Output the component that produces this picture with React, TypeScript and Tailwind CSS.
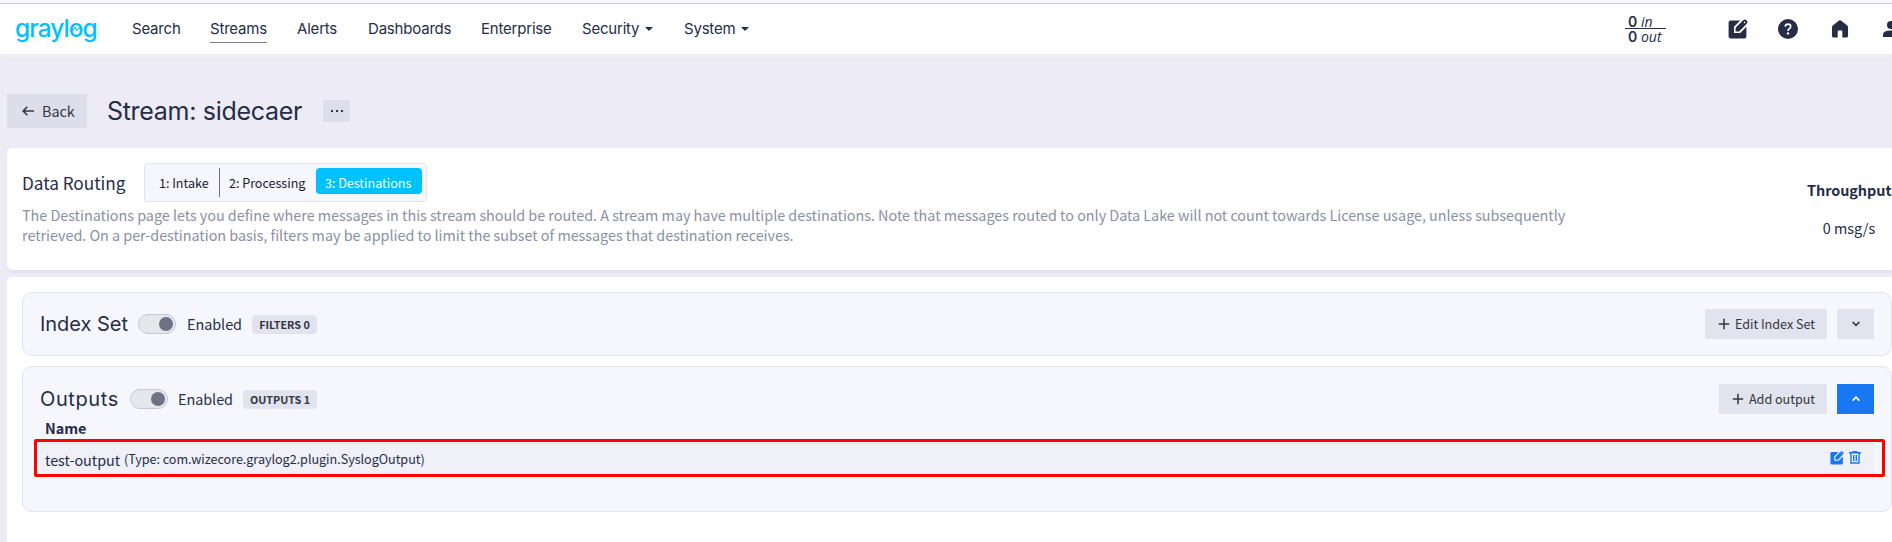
import React from "react";

const sans = "font-['Noto_Sans_CJK_SC',sans-serif]";
const head = "font-['Inter',sans-serif]";

function EditSquare({ className }: { className: string }) {
  return (
    <svg viewBox="0 0 20 20" className={className} fill="currentColor">
      <path d="M2.600 1.600H12.200L6 7.800V14H12.200L18.400 7.800V17.400A2 2 0 0 1 16.400 19.400H2.600A2 2 0 0 1 .6 17.400V3.600A2 2 0 0 1 2.600 1.600Z" />
      <path
        fillRule="evenodd"
        d="M7.600 12.400V8.700L15.100 1.200Q16.800 -.3 18.500 1.300Q20.200 3 18.800 4.800L11.200 12.400ZM15.600 3.300L16.700 4.400L17.600 3.500L16.500 2.400Z"
      />
    </svg>
  );
}

function Plus() {
  return (
    <svg viewBox="0 0 12 12" className="h-3 w-3" fill="none" stroke="currentColor" strokeWidth="1.5">
      <path d="M6 .8V11.200M.8 6H11.200" />
    </svg>
  );
}

function Caret() {
  return (
    <svg viewBox="0 0 8 4" className="ml-1.5 h-1 w-2" fill="currentColor">
      <path d="M0 0H8L4 4Z" />
    </svg>
  );
}

function Logo() {
  return (
    <div className="relative ml-[15px] h-[30px] w-[84px] shrink-0 text-[#00c1ff]">
      <span className={`${head} block whitespace-nowrap text-[24.500px] font-medium leading-[30px] tracking-[-0.95px]`}>graylog</span>
      <svg viewBox="0 0 8 6" className="absolute left-[57px] top-[13px] h-1.5 w-2" fill="none" stroke="currentColor">
        <path d="M0 3.500H2L3.300 1L4.700 5L6 2.500H8" />
      </svg>
    </div>
  );
}

function Toggle() {
  return (
    <span className="flex h-5 w-[38px] items-center justify-end rounded-full border border-[#c5c8dc] bg-[#e6e7ea] pr-0.5">
      <span className="h-3.5 w-3.5 rounded-full bg-[#6e7284]" />
    </span>
  );
}

export default function App() {
  return (
    <div className={`${sans} h-[542px] w-[1892px] overflow-hidden bg-[#edebf5] text-[14.4px] tracking-[-0.033px] text-[#252d47]`}>
      <div className="h-1 border-b border-[#c9c9cf] bg-[#f8f8fa]" />
      <header className={`${head} flex h-[50px] bg-white text-[15px] shadow-[0_3px_3px_rgba(240,240,242,0.9)]`}>
        <div className="mt-[9px]">
          <Logo />
        </div>
        <nav className="ml-[33px] flex h-[50px] leading-[50px] tracking-[-0.2px]">
          <span className="w-[78px]">Search</span>
          <span className="w-[87px]">
            <span className="block h-[39px] w-[57px] border-b border-[#7d7896]">Streams</span>
          </span>
          <span className="w-[71px]">Alerts</span>
          <span className="w-[113px]">Dashboards</span>
          <span className="w-[101px]">Enterprise</span>
          <span className="flex w-[102px] items-center">Security<Caret /></span>
          <span className="flex items-center">System<Caret /></span>
        </nav>
        <div className="ml-auto flex w-[267px] pt-2.5 leading-[15px]">
          <div className="h-[31px] w-[41px] font-['Open_Sans',sans-serif] text-[14px]">
            <div className="flex h-[15px] items-center border-b border-[#252d47] pl-[3px]"><b className={`${head} w-[13px] text-[14px] font-semibold`}>0</b><i>in</i></div>
            <div className="flex h-[15px] items-center pl-[3px]"><b className={`${head} w-[13px] text-[14px] font-semibold`}>0</b><i>out</i></div>
          </div>
          <EditSquare className="ml-[62px] mt-[5px] h-5 w-5" />
          <svg viewBox="0 0 20 20" className="ml-[30px] mt-[5px] h-5 w-5">
            <circle cx="10" cy="10" r="10" fill="currentColor" />
            <path d="M7.200 7.600Q7.600 5.200 10 5.200Q12.700 5.200 12.700 7.600Q12.700 8.800 11.200 9.900Q10 10.800 10 12" fill="none" stroke="white" strokeWidth="1.700" />
            <circle cx="10" cy="14.400" r="1.200" fill="white" />
          </svg>
          <svg viewBox="0 0 16 18" className="ml-[34px] mt-1.5 h-[18px] w-4" fill="currentColor">
            <path d="M0 7Q0 6 .8 5.400L7 .6Q8 0 9 .6L15.200 5.400Q16 6 16 7V16Q16 17.500 14.500 17.500H10.300V11Q10.300 10.500 9.800 10.500H6.200Q5.700 10.500 5.700 11V17.500H1.500Q0 17.500 0 16Z" />
          </svg>
          <svg viewBox="0 0 16 16" className="-mr-2 ml-[35px] mt-[7px] h-4 w-4 shrink-0" fill="currentColor">
            <circle cx="8" cy="4" r="4" />
            <path d="M0 16V13.500Q0 9.500 8 9.500Q16 9.500 16 13.500V16Z" />
          </svg>
        </div>
      </header>

      <div className="flex h-[94px] items-center pb-px pl-[7px] pt-[20px]">
        <button className="flex h-[34px] w-20 items-center bg-[#dcdeeb] pl-[15px] text-[#333640]">
          <svg viewBox="0 0 12 10" className="h-2.5 w-3" fill="none" stroke="currentColor" strokeWidth="1.600">
            <path d="M12 5H1.200M5.300 .8L1.200 5L5.300 9.200" />
          </svg>
          <span className="ml-2">Back</span>
        </button>
        <h1 className={`${head} ml-5 mt-0.5 w-[216px] whitespace-nowrap text-[25px] tracking-[-0.3px]`}>Stream: sidecaer</h1>
        <button className="flex h-[22px] w-[27px] items-center justify-center gap-[3px] bg-[#dcdeeb]">
          <i className="h-0.5 w-0.5 bg-[#333640]" />
          <i className="h-0.5 w-0.5 bg-[#333640]" />
          <i className="h-0.5 w-0.5 bg-[#333640]" />
        </button>
      </div>

      <section className="ml-[7px] flex h-[122px] rounded-l-[5px] bg-white pl-[15px] pt-[15px] shadow-[0_3px_3px_rgba(0,0,0,0.04)]">
        <div className="w-[1785px] shrink-0">
          <div className="flex h-[39px]">
            <h2 className="w-[122px] whitespace-nowrap text-[17.200px] leading-10">Data Routing</h2>
            <div className="flex h-[39px] w-[283px] rounded border border-[#e2e3ee] bg-[#f6f7fc] pl-[5px] pt-1 text-[12.6px] leading-[29px] text-[#1c2130]">
              <span className="h-[29px] w-[70px] border-r border-[#6e7284] pl-[9px]">1: Intake</span>
              <span className="w-24 pl-[9px]">2: Processing</span>
              <span className="h-[26px] w-[106px] rounded bg-[#00c1ff] pl-[9px] text-white">3: Destinations</span>
            </div>
          </div>
          <p className="mt-[3px] whitespace-nowrap leading-5 text-[#8b8fa3]">
            The Destinations page lets you define where messages in this stream should be routed. A stream may have multiple destinations. Note that messages routed to only Data Lake will not count towards License usage, unless subsequently
            <br />
            retrieved. On a per-destination basis, filters may be applied to limit the subset of messages that destination receives.
          </p>
        </div>
        <div className="w-[84px] pt-[15px] text-center leading-6">
          <div className="font-bold">Throughput</div>
          <div className="pt-3.5">0 msg/s</div>
        </div>
      </section>

      <section className="ml-[7px] mt-[7px] h-[265px] rounded-tl-[5px] bg-white pl-[15px] pt-[15px]">
        <div className="h-16 rounded-[10px] border border-[#e2e3ee] bg-[#f6f7fc] px-[17px]">
          <div className="flex h-[62px] items-center">
            <h2 className={`${head} w-[98px] whitespace-nowrap text-[20px]`}>Index Set</h2>
            <Toggle />
            <span className="ml-[11px] w-[65px]">Enabled</span>
            <span className="flex h-[19px] w-[65px] items-center justify-center rounded bg-[#e1e3ee] text-[10.800px] font-bold text-[#333640]">FILTERS 0</span>
            <button className="ml-auto flex h-[30px] w-[122px] items-center bg-[#e1e3ee] pl-[13px] text-[12.600px] text-[#333640]"><Plus /><span className="ml-[5px]">Edit Index Set</span></button>
            <button className="ml-2.5 flex h-[30px] w-[37px] items-center justify-center bg-[#e1e3ee] text-[#333640]">
              <svg viewBox="0 0 8 6" className="h-1.5 w-2" fill="none" stroke="currentColor" strokeWidth="1.700"><path d="M.6 1L4 4.400L7.400 1" /></svg>
            </button>
          </div>
        </div>

        <div className="mt-2.5 h-[146px] rounded-[10px] border border-[#e2e3ee] bg-[#f6f7fc] px-[17px] pt-px">
          <div className="flex h-[62px] items-center">
            <h2 className={`${head} w-[90px] whitespace-nowrap text-[20px] tracking-[0.6px]`}>Outputs</h2>
            <Toggle />
            <span className="ml-2.5 w-[65px]">Enabled</span>
            <span className="flex h-[19px] w-[74px] items-center justify-center rounded bg-[#e1e3ee] text-[10.800px] font-bold text-[#333640]">OUTPUTS 1</span>
            <button className="ml-auto flex h-[30px] w-[108px] items-center bg-[#e1e3ee] pl-[13px] text-[12.600px] text-[#333640]"><Plus /><span className="ml-[5px]">Add output</span></button>
            <button className="ml-2.5 flex h-[30px] w-[37px] items-center justify-center bg-[#1877f2] text-white">
              <svg viewBox="0 0 8 6" className="h-1.5 w-2" fill="none" stroke="currentColor" strokeWidth="1.700"><path d="M.6 4.600L4 1.200L7.400 4.600" /></svg>
            </button>
          </div>
          <div className="-mt-[13px] h-[26px] pl-[5px] font-bold leading-[22px]">Name</div>
          <div className="relative flex h-[31px] items-center border-t border-[#e2e3ee] bg-[#f0f0f8] pl-[5px] pr-[13px]">
            <span className="w-[79px] pt-px">test-output</span>
            <span className="pt-px text-[12.600px]">(Type: com.wizecore.graylog2.plugin.SyslogOutput)</span>
            <EditSquare className="mb-[3px] ml-auto h-3.5 w-3.5 text-[#1877f2]" />
            <svg viewBox="0 0 12 13" className="mb-[3px] ml-[5px] h-[13px] w-3 text-[#1877f2]" fill="none" stroke="currentColor" strokeWidth="1.400">
              <path d="M0 1.700H12M3.500 .7H8.500M2 2V12H10V2M4.700 4V10M7.300 4V10" />
            </svg>
            <div className="absolute -left-1.5 -top-[5px] h-[38px] w-[1851px] rounded-[2px] border-[3px] border-[#ff0000]" />
          </div>
        </div>
      </section>
    </div>
  );
}
